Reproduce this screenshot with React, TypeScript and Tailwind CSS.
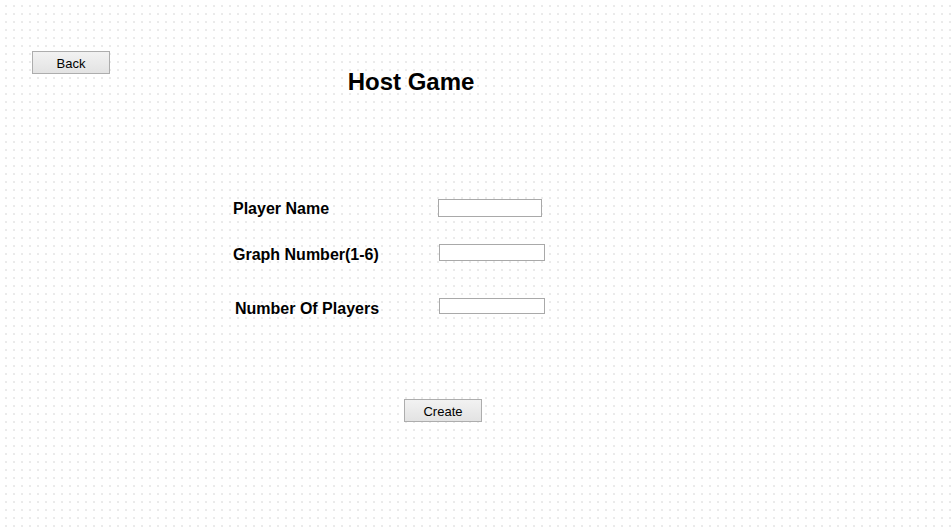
import React from "react";

function FormButton({ label, className }: { label: string; className?: string }) {
  return (
    <button
      type="button"
      className={`h-[23px] w-[78px] border border-[#adadad] bg-gradient-to-b from-[#f2f2f2] to-[#e3e3e3] pt-[2px] text-[13px] leading-[19px] text-black ${className ?? ""}`}
    >
      {label}
    </button>
  );
}

export default function App() {
  return (
    <div
      className="h-[532px] w-[951px] overflow-hidden bg-white bg-[radial-gradient(circle,#dcdcdc_0.5px,transparent_1px)] bg-[length:8px_8px] bg-[position:2px_2px] text-black"
      style={{ fontFamily: '"Liberation Sans", Arial, sans-serif' }}
    >
      {/* Header */}
      <div className="flex items-start pl-[32px] pt-[51px]">
        <FormButton label="Back" />
        <h1 className="mt-[17px] w-[602px] text-center text-[24px] font-bold leading-[28px]">
          Host Game
        </h1>
      </div>

      {/* Form */}
      <div className="mt-[103px] flex flex-col pl-[233px]">
        <div className="flex items-start">
          <label className="w-[205px] text-[16px] font-bold leading-[20px]">Player Name</label>
          <input type="text" className="h-[18px] w-[104px] border border-[#a9a9a9] bg-white outline-none" />
        </div>
        <div className="mt-[25px] flex items-start">
          <label className="w-[206px] text-[16px] font-bold leading-[21px]">Graph Number(1-6)</label>
          <input type="text" className="h-[17px] w-[106px] border border-[#a9a9a9] bg-white outline-none" />
        </div>
        <div className="mt-[33px] flex items-start">
          <label className="ml-[2px] w-[204px] pt-[1px] text-[16px] font-bold leading-[19px]">
            Number Of Players
          </label>
          <input type="text" className="h-[16px] w-[106px] border border-[#a9a9a9] bg-white outline-none" />
        </div>
        <div className="mt-[81px] flex">
          <FormButton label="Create" className="ml-[171px]" />
        </div>
      </div>
    </div>
  );
}
